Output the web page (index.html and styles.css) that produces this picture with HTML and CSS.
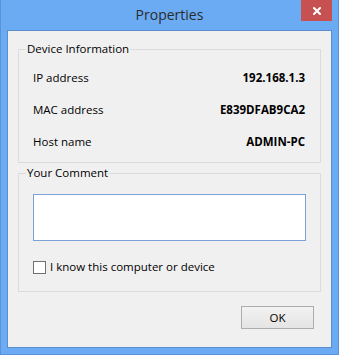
FILE: index.html
```html
<!DOCTYPE html>
<html lang="en">
<head>
  <meta charset="UTF-8" />
  <title>Properties</title>
  <link rel="stylesheet" href="styles.css">
</head>
<body>
  <div class="window">
    <div class="titlebar">
      <span></span>
      <div class="title">Properties</div>
      <button class="close" title="Close">
        <svg width="8" height="8" viewBox="0 0 8 8">
          <path d="M1 1 L7 7 M7 1 L1 7" stroke="#fff" stroke-width="2" stroke-linecap="square" />
        </svg>
      </button>
    </div>

    <div class="client">
      <fieldset class="group info">
        <legend>Device Information</legend>
        <div class="row"><span>IP address</span><b>192.168.1.3</b></div>
        <div class="row"><span>MAC address</span><b>E839DFAB9CA2</b></div>
        <div class="row"><span>Host name</span><b>ADMIN-PC</b></div>
      </fieldset>

      <fieldset class="group comment">
        <legend>Your Comment</legend>
        <textarea id="comment"></textarea>
        <label class="check"><input type="checkbox"><span>I know this computer or device</span></label>
      </fieldset>

      <div class="actions">
        <button class="ok">OK</button>
      </div>
    </div>
  </div>
</body>
</html>
```

FILE: styles.css
```css
body {
  margin: 0;
  font-family: "Open Sans", "Noto Sans", sans-serif;
  font-size: 11.5px;
  color: #000;
}
.window {
  box-sizing: border-box;
  width: 339px;
  height: 355px;
  background: #6aabf4;
  border: 1px solid #5b93d6;
  border-top: none;
  display: flex;
  flex-direction: column;
}
.titlebar {
  height: 30px;
  display: grid;
  grid-template-columns: 1fr auto 1fr;
  align-items: start;
}
.title {
  font-size: 14px;
  line-height: 30px;
  color: #2b2b2b;
}
.close {
  justify-self: end;
  margin-right: 6px;
  width: 31px;
  height: 21px;
  padding: 0;
  border: none;
  background: #c75050;
  display: flex;
  align-items: center;
  justify-content: center;
}
.client {
  box-sizing: border-box;
  margin: 0 6px 6px 6px;
  height: 318px;
  background: #f0f0f0;
  border: 1px solid #5b8ccc;
  padding: 0 10px;
  display: flex;
  flex-direction: column;
}
.group {
  margin: 0;
  border: 1px solid #dcdcdc;
  min-width: 0;
}
.group legend {
  line-height: 16px;
  padding: 0 1px;
  margin-left: -7px;
}
.info {
  margin-top: 10px;
  padding: 13px 15px 12px 14px;
  display: flex;
  flex-direction: column;
  gap: 16px;
}
.row {
  display: flex;
  justify-content: space-between;
  line-height: 16px;
}
.row b {
  font-weight: 700;
}
.comment {
  margin-top: 2px;
  padding: 13px 14px 16px 14px;
}
.comment textarea {
  display: block;
  box-sizing: border-box;
  width: 273px;
  height: 47px;
  margin: 0;
  border: 1px solid #7ba2d7;
  background: #fff;
  resize: none;
  font: inherit;
}
.check {
  margin-top: 18px;
  display: flex;
  align-items: center;
  gap: 4px;
  line-height: 16px;
}
.check input {
  appearance: none;
  width: 13px;
  height: 13px;
  margin: 0;
  border: 1px solid #707070;
  background: #fff;
}
.actions {
  display: flex;
  justify-content: flex-end;
  padding-right: 7px;
  margin-top: 14px;
}
.ok {
  width: 73px;
  height: 23px;
  border: 1px solid #adadad;
  background: linear-gradient(#f2f2f2, #e4e4e4);
  font: inherit;
  color: #000;
  padding: 0;
}
```
